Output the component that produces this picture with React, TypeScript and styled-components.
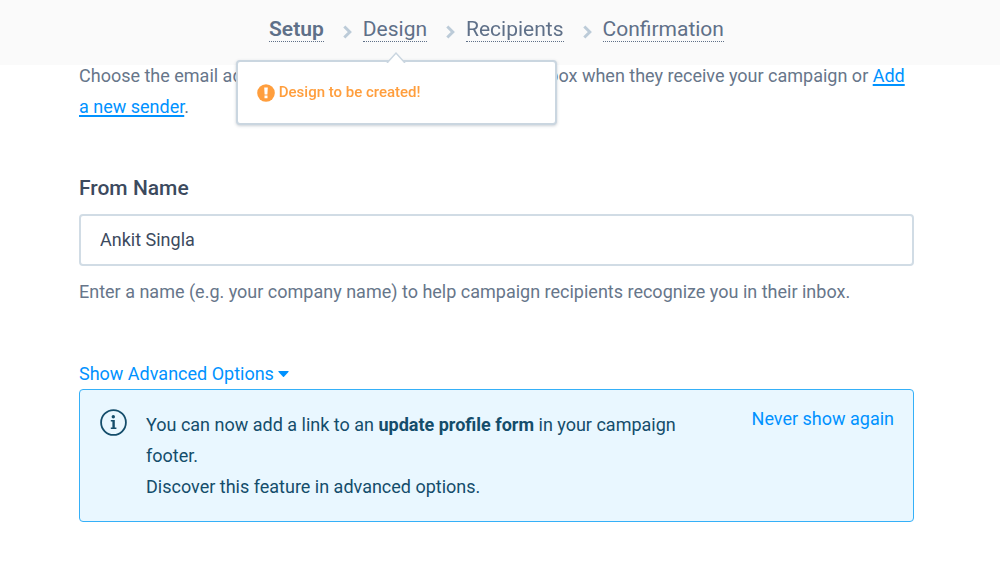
import React from "react";
import styled, { createGlobalStyle } from "styled-components";

const GlobalStyle = createGlobalStyle`
  *, *::before, *::after { box-sizing: border-box; }
  body {
    margin: 0;
    background: #ffffff;
    color: #67768a;
    font: 400 18px/31px Roboto, "Liberation Sans", sans-serif;
  }
`;

const TopBar = styled.header`
  position: fixed;
  inset: 0 0 auto 0;
  z-index: 1;
  padding: 17px 86px 23px 79px;
  background: #fafafa;
`;

const StepList = styled.ol`
  display: flex;
  justify-content: center;
  align-items: center;
  gap: 11px;
  margin: 0;
  padding: 0;
  list-style: none;
`;

const StepItem = styled.li`
  position: relative;
  display: flex;
  align-items: center;
`;

const StepLink = styled.a<{ $current?: boolean }>`
  display: block;
  border-bottom: 1px dotted #5f7088;
  color: #5f7088;
  font-size: 21px;
  font-weight: ${(p) => (p.$current ? 600 : 400)};
  line-height: 24px;
  text-decoration: none;
`;

const Chevron = styled.svg`
  display: block;
  width: 17px;
  height: 18px;
  margin-top: 4px;
`;

const Tooltip = styled.div`
  position: absolute;
  top: 43px;
  left: -127px;
  width: 321px;
  padding: 17px 19px;
  display: flex;
  align-items: center;
  gap: 4px;
  border: 2px solid #cad6e0;
  border-radius: 4px;
  background: #ffffff;
  box-shadow: 0 1px 3px rgba(80, 100, 120, 0.3);
  color: #ff9e3d;
  font-size: 15px;
  font-weight: 500;
  line-height: 27px;
`;

const TooltipArrow = styled.svg`
  position: absolute;
  top: -11px;
  left: 148px;
  width: 20px;
  height: 12px;
`;

const AlertIcon = styled.svg`
  width: 18px;
  height: 18px;
`;

const Page = styled.main`
  padding: 60px 86px 54px 79px;
`;

const Text = styled.p`
  margin: 0;
`;

const TextLink = styled.a`
  color: #0092ff;
  text-decoration: underline;
  text-decoration-thickness: 2px;
  text-underline-offset: 2px;
`;

const Field = styled.div`
  display: flex;
  flex-direction: column;
  margin: 51px 0;
`;

const Label = styled.label`
  margin-bottom: 10px;
  color: #3c4a5e;
  font-size: 21px;
  font-weight: 500;
`;

const Input = styled.input`
  width: 100%;
  height: 52px;
  margin-bottom: 10px;
  padding: 0 19px 2px;
  border: 2px solid #d1dce5;
  border-radius: 4px;
  background: #ffffff;
  color: #3c4a5e;
  font: inherit;
`;

const LinkButton = styled.button`
  display: flex;
  align-items: center;
  gap: 4px;
  padding: 0;
  border: 0;
  background: none;
  color: #0092ff;
  font: inherit;
  white-space: nowrap;
  cursor: pointer;
`;

const Caret = styled.svg`
  width: 11px;
  height: 6px;
`;

const Notice = styled.section`
  display: flex;
  align-items: flex-start;
  padding: 13px 19px 19px;
  border: 1px solid #35b0f8;
  border-radius: 4px;
  background: #e9f7ff;
  color: #144d6b;
`;

const InfoIcon = styled.svg`
  flex: none;
  width: 27px;
  height: 27px;
  margin: 6px 19px 0 1px;
`;

const NoticeBody = styled.div`
  flex: 1;
  padding: 6px 60px 0 0;
`;

const steps = ["Setup", "Design", "Recipients", "Confirmation"];

function Separator() {
  return (
    <Chevron viewBox="0 0 17 18" aria-hidden="true">
      <path d="M9.3 3.5 L14.8 9 L9.3 14.5" fill="none" stroke="#bccbd8" strokeWidth="3" />
    </Chevron>
  );
}

function DesignTooltip() {
  return (
    <Tooltip role="tooltip" id="design-status">
      <TooltipArrow viewBox="0 0 20 12" aria-hidden="true">
        <path d="M1 12 L10 2 L19 12" fill="#ffffff" stroke="#cad6e0" strokeWidth="1.5" />
      </TooltipArrow>
      <AlertIcon viewBox="0 0 18 18" aria-hidden="true">
        <circle cx="9" cy="9" r="8.8" fill="#ff9e3d" />
        <path d="M7.2 3.5 H10.8 L10.4 10.5 H7.6 Z M7.5 11.6 H10.5 V14.3 H7.5 Z" fill="#ffffff" />
      </AlertIcon>
      Design to be created!
    </Tooltip>
  );
}

export default function App() {
  return (
    <>
      <GlobalStyle />
      <TopBar>
        <nav aria-label="Campaign steps">
          <StepList>
            {steps.map((step, i) => (
              <React.Fragment key={step}>
                {i > 0 && <li aria-hidden="true"><Separator /></li>}
                <StepItem>
                  <StepLink
                    href="#"
                    $current={i === 0}
                    aria-current={i === 0 ? "step" : undefined}
                    aria-describedby={step === "Design" ? "design-status" : undefined}
                  >
                    {step}
                  </StepLink>
                  {step === "Design" && <DesignTooltip />}
                </StepItem>
              </React.Fragment>
            ))}
          </StepList>
        </nav>
      </TopBar>
      <Page>
        <Text>
          Choose the email address to be shown in your recipients inbox when they receive your campaign or{" "}
          <TextLink href="#">Add a new sender</TextLink>.
        </Text>
        <Field>
          <Label htmlFor="from-name">From Name</Label>
          <Input id="from-name" type="text" defaultValue="Ankit Singla" aria-describedby="from-name-help" />
          <Text id="from-name-help">
            Enter a name (e.g. your company name) to help campaign recipients recognize you in their inbox.
          </Text>
        </Field>
        <LinkButton type="button">
          Show Advanced Options
          <Caret viewBox="0 0 11 6" aria-hidden="true">
            <path d="M0.8 0 H10.2 Q11 0.2 10.4 1 L6 5.7 Q5.5 6.1 5 5.7 L0.6 1 Q0 0.2 0.8 0 Z" fill="#0092ff" />
          </Caret>
        </LinkButton>
        <Notice>
          <InfoIcon viewBox="0 0 27 27" aria-hidden="true">
            <circle cx="13.5" cy="13.5" r="12.4" fill="none" stroke="#144d6b" strokeWidth="1.8" />
            <circle cx="13.3" cy="7.8" r="1.7" fill="#144d6b" />
            <path d="M10.8 11 H14.8 V18.6 H16.4 V20 H10.8 V18.6 H12.4 V12.4 H10.8 Z" fill="#144d6b" />
          </InfoIcon>
          <NoticeBody>
            <Text>
              You can now add a link to an <strong>update profile form</strong> in your campaign footer.
            </Text>
            <Text>Discover this feature in advanced options.</Text>
          </NoticeBody>
          <LinkButton type="button">Never show again</LinkButton>
        </Notice>
      </Page>
    </>
  );
}
